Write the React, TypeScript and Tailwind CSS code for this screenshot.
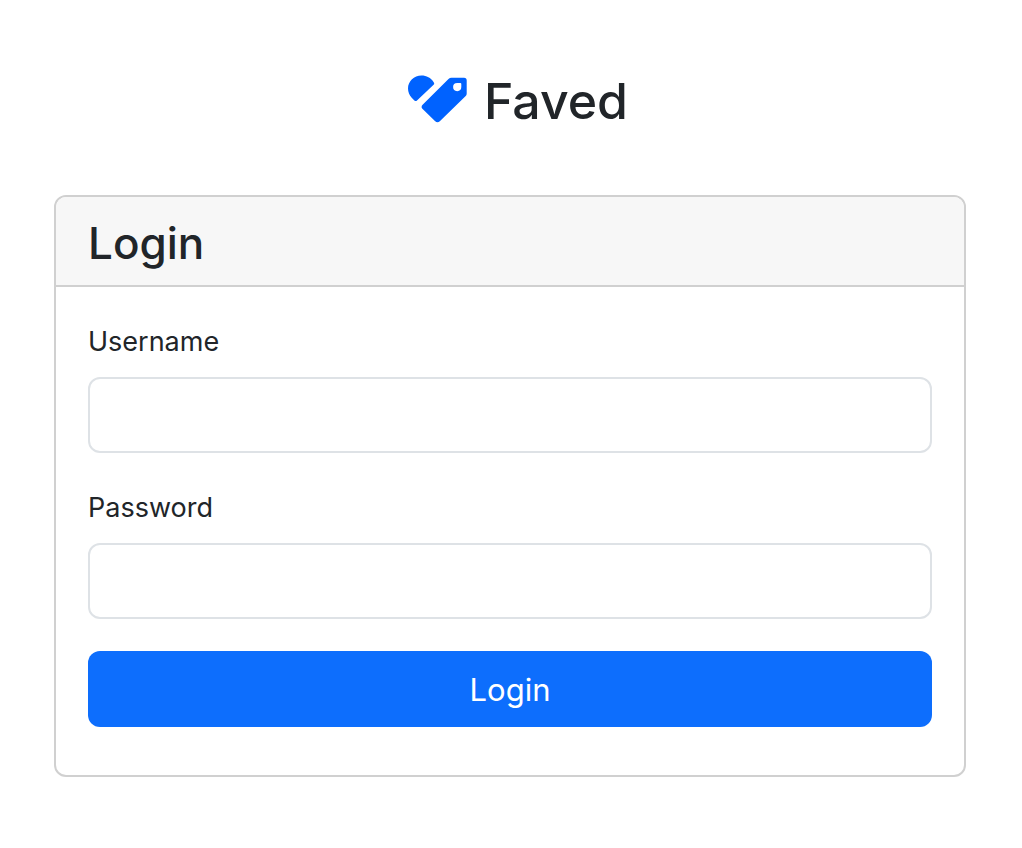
function Logo() {
  return (
    <svg className="mb-1.5 h-12 w-[60px] shrink-0" viewBox="0 0 60 48" aria-hidden="true" fill="#0062ff">
      <path d="M9 25.400 L25.600 9.800 C26.400 9 26.400 8.200 25.700 7.200 C22.800 2.700 18.500 .5 13.500 .5 C6 .5 0 6.300 0 13.500 C0 17 1.400 20.300 3.700 22.700 L6.400 25.400 C7.200 26.200 8.200 26.200 9 25.400 Z" />
      <path fillRule="evenodd" d="M43.500 2.700 H56 Q58.700 2.700 58.700 5.400 V18.500 Q58.700 20 57.700 21 L31.800 46.300 Q29.500 48.300 27.200 46.300 L14.400 33.700 Q12.700 31.800 14.600 29.800 L40.500 4 Q41.800 2.700 43.500 2.700 Z M49.200 8 H52.300 Q53.300 8 53.300 9 V12.100 A4.100 4.100 0 1 1 49.200 8 Z" />
    </svg>
  );
}

function Field({ id, label, type }: { id: string; label: string; type: string }) {
  return (
    <div className="mb-8">
      <label htmlFor={id} className="mb-3 block text-[27px] leading-[46px]">{label}</label>
      <input id={id} name={id} type={type} className="block h-[76px] w-full rounded-xl border-2 border-[#dee2e6] bg-white px-6 text-[31px] outline-none focus:border-[#86b7fe]" />
    </div>
  );
}

export default function App() {
  return (
    <main className="min-h-screen bg-white pt-16 pr-14 pb-16 pl-[54px] font-['Inter',sans-serif] text-[#212529]">
      <header className="mb-14 flex items-center justify-center gap-4 pl-4">
        <Logo />
        <h1 className="text-[50px] leading-[75px] font-medium">Faved</h1>
      </header>
      <section className="overflow-hidden rounded-xl border-2 border-[#d0d0d0]">
        <div className="border-b-2 border-[#d0d0d0] bg-[#f7f7f7] px-8 pt-4.5 pb-3.5">
          <h2 className="text-[44px] leading-[56px] font-medium">Login</h2>
        </div>
        <form className="px-8 pt-8 pb-12" onSubmit={(e) => e.preventDefault()}>
          <Field id="username" label="Username" type="text" />
          <Field id="password" label="Password" type="password" />
          <button type="submit" className="block h-[76px] w-full rounded-xl bg-[#0d6efd] pt-0.5 text-[31px] text-white">Login</button>
        </form>
      </section>
    </main>
  );
}
